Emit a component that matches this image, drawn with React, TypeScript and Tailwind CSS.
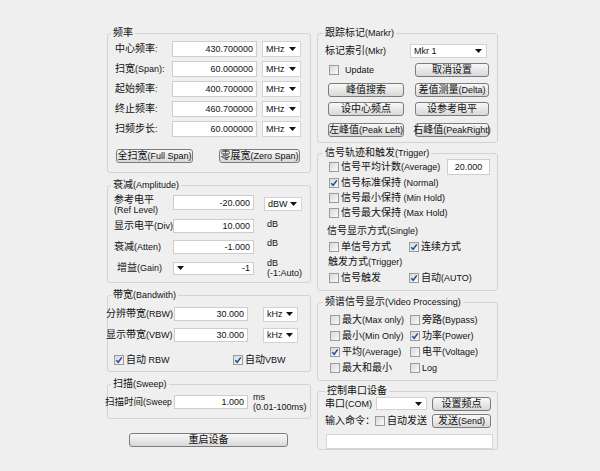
import React from "react";

function T({ s, lat = "text-[9px]" }: { s: string; lat?: string }) {
  const parts = s.match(/[\u0000-\u1fff]+|[^\u0000-\u1fff]+/g) || [];
  return (
    <>
      {parts.map((p, i) =>
        p.charCodeAt(0) < 0x2000 ? (
          <span key={i} className={lat}>
            {p}
          </span>
        ) : (
          <span key={i}>{p}</span>
        )
      )}
    </>
  );
}

function Arrow() {
  return (
    <svg width="7" height="4" viewBox="0 0 7 4" className="shrink-0">
      <path d="M0 0h7L3.5 4z" fill="#111" />
    </svg>
  );
}

function Group({
  title,
  cls = "",
  lg = "ml-[3px]",
  children,
}: {
  title: string;
  cls?: string;
  lg?: string;
  children: React.ReactNode;
}) {
  return (
    <fieldset className={"border border-[#d3d3d3] rounded-[3px] min-w-0 " + cls}>
      <legend className={"px-[2px] leading-[12px] whitespace-nowrap " + lg}>
        <T s={title} />
      </legend>
      {children}
    </fieldset>
  );
}

function Field({ cls, v, center }: { cls: string; v?: string; center?: boolean }) {
  return (
    <div
      className={
        "bg-white border border-[#cdcdcd] flex items-center text-[9px] shrink-0 " +
        (center ? "justify-center " : "justify-end pr-[3px] ") +
        cls
      }
    >
      {v}
    </div>
  );
}

function Select({ cls, v }: { cls: string; v?: string }) {
  return (
    <div
      className={
        "bg-white border border-[#d2d2d2] flex items-center justify-between pl-[3px] pr-[4px] text-[9px] shrink-0 " +
        cls
      }
    >
      <span>{v}</span>
      <Arrow />
    </div>
  );
}

function Btn({ cls, t }: { cls: string; t: string }) {
  return (
    <div
      className={
        "h-[14px] border border-[#7c7c7c] rounded-[3px] bg-linear-to-b from-[#f8f8f8] to-[#d8d8d8] flex items-center justify-center whitespace-nowrap shrink-0 leading-[12px] " +
        cls
      }
    >
      <T s={t} />
    </div>
  );
}

function CB({ checked, cls = "" }: { checked?: boolean; cls?: string }) {
  return (
    <span
      className={
        "w-[10px] h-[10px] border border-[#9a9a9a] bg-linear-to-br from-[#d9d9d9] to-[#fafafa] inline-flex items-center justify-center shrink-0 " +
        cls
      }
    >
      {checked && (
        <svg width="8" height="8" viewBox="0 0 8 8">
          <path d="M1.3 4.2L3.2 6.3L6.8 1.4" stroke="#24479a" strokeWidth="1.5" fill="none" />
        </svg>
      )}
    </span>
  );
}

function Check({ t, checked, w }: { t: string; checked?: boolean; w?: string }) {
  return (
    <div className={"flex items-center whitespace-nowrap " + (w || "")}>
      <CB checked={checked} />
      <span className="ml-[2px]">
        <T s={t} />
      </span>
    </div>
  );
}

export default function App() {
  const freq: [string, string][] = [
    ["中心频率:", "430.700000"],
    ["扫宽(Span):", "60.000000"],
    ["起始频率:", "400.700000"],
    ["终止频率:", "460.700000"],
    ["扫频步长:", "60.000000"],
  ];
  return (
    <div className="w-[600px] h-[471px] bg-[#efefef] flex gap-[6px] pl-[107px] pt-[27px] font-['Liberation_Sans','Noto_Sans_CJK_SC',sans-serif] text-[10px] leading-[12px] text-[#111] overflow-hidden">
      {/* Left column */}
      <div className="w-[204px] flex flex-col">
        <Group title="频率" lg="ml-[3px]">
          <div className="pt-[2px] pb-[9px] pl-[7px] flex flex-col gap-[4px]">
            {freq.map(([l, v]) => (
              <div key={l} className="flex items-center h-[16px]">
                <span className="w-[57px] whitespace-nowrap">
                  <T s={l} />
                </span>
                <Field cls="w-[85px] h-[16px]" v={v} />
                <Select cls="ml-[5px] w-[39px] h-[16px]" v="MHz" />
              </div>
            ))}
            <div className="flex mt-[8px]">
              <Btn cls="ml-[1px] w-[77px]" t="全扫宽(Full Span)" />
              <Btn cls="ml-[26px] w-[81px]" t="零展宽(Zero Span)" />
            </div>
          </div>
        </Group>

        <Group title="衰减(Amplitude)" cls="mt-[6px]" lg="ml-[3px]">
          <div className="pt-[4px] pb-[7px] pl-[6px] flex flex-col">
            <div className="flex items-start h-[21px]">
              <span className="w-[59px] leading-[10px] flex flex-col whitespace-nowrap">
                <span>参考电平</span>
                <span>
                  <T s="(Ref Level)" />
                </span>
              </span>
              <Field cls="w-[81px] h-[15px]" v="-20.000" />
              <Select cls="ml-[10px] mt-[2px] w-[38px] h-[14px]" v="dBW" />
            </div>
            <div className="flex items-center h-[14px] mt-[3px]">
              <span className="w-[59px] whitespace-nowrap">
                <T s="显示电平(Div)" />
              </span>
              <Field cls="w-[81px] h-[14px]" v="10.000" />
              <span className="ml-[13px] -mt-[5px] text-[9px]">dB</span>
            </div>
            <div className="flex items-center h-[14px] mt-[7px]">
              <span className="w-[59px] whitespace-nowrap">
                <T s="衰减(Atten)" />
              </span>
              <Field cls="w-[81px] h-[14px]" v="-1.000" />
              <span className="ml-[13px] -mt-[9px] text-[9px]">dB</span>
            </div>
            <div className="flex items-center h-[14px] mt-[7px]">
              <span className="w-[59px] pl-[3px] whitespace-nowrap">
                <T s="增益(Gain)" />
              </span>
              <div className="w-[81px] h-[13px] bg-white border border-[#cdcdcd] flex items-center justify-between pl-[3px] pr-[3px] text-[9px] shrink-0">
                <Arrow />
                <span>-1</span>
              </div>
              <div className="ml-[13px] flex flex-col leading-[10px] text-[9px] whitespace-nowrap">
                <span>dB</span>
                <span>(-1:Auto)</span>
              </div>
            </div>
          </div>
        </Group>

        <Group title="带宽(Bandwith)" cls="mt-[6px]" lg="ml-[3px]">
          <div className="pt-[6px] pb-[5px] flex flex-col">
            <div className="flex items-center h-[14px] -ml-[2px]">
              <span className="w-[68px] whitespace-nowrap">
                <T s="分辨带宽(RBW)" />
              </span>
              <Field cls="w-[74px] h-[14px]" v="30.000" />
              <Select cls="ml-[15px] w-[35px] h-[15px]" v="kHz" />
            </div>
            <div className="flex items-center h-[14px] -ml-[2px] mt-[7px]">
              <span className="w-[68px] whitespace-nowrap">
                <T s="显示带宽(VBW)" />
              </span>
              <Field cls="w-[74px] h-[14px]" v="30.000" />
              <Select cls="ml-[15px] w-[35px] h-[15px]" v="kHz" />
            </div>
            <div className="flex items-center h-[12px] mt-[12px] pl-[6px]">
              <Check t="自动 RBW" checked w="w-[119px]" />
              <Check t="自动VBW" checked />
            </div>
          </div>
        </Group>

        <Group title="扫描(Sweep)" cls="mt-[6px]" lg="ml-[3px]">
          <div className="pt-[5px] pb-[9px]">
            <div className="flex items-center h-[14px] -ml-[3px]">
              <span className="w-[69px] whitespace-nowrap text-[9.5px]">
                <T s="扫描时间(Sweep" lat="text-[8.5px]" />
              </span>
              <Field cls="w-[74px] h-[14px]" v="1.000" />
              <div className="ml-[5px] flex flex-col leading-[10px] text-[9px] whitespace-nowrap">
                <span>ms</span>
                <span>(0.01-100ms)</span>
              </div>
            </div>
          </div>
        </Group>

        <Btn cls="mt-[14px] ml-[22px] w-[159px]" t="重启设备" />
      </div>

      {/* Right column */}
      <div className="w-[181px] flex flex-col">
        <Group title="跟踪标记(Markr)" lg="ml-[5px]">
          <div className="pt-[5px] pb-[5px] flex flex-col">
            <div className="flex items-center h-[14px] pl-[7px]">
              <span className="w-[85px] whitespace-nowrap">
                <T s="标记索引(Mkr)" />
              </span>
              <Select cls="w-[77px] h-[14px]" v="Mkr 1" />
            </div>
            <div className="flex items-center h-[14px] mt-[5px] pl-[10px] gap-[11px]">
              <div className="w-[76px] flex items-center">
                <CB cls="ml-[1px]" />
                <span className="ml-[6px] text-[9px]">Update</span>
              </div>
              <Btn cls="w-[74px]" t="取消设置" />
            </div>
            <div className="flex mt-[6px] pl-[10px] gap-[11px]">
              <Btn cls="w-[76px]" t="峰值搜索" />
              <Btn cls="w-[74px]" t="差值测量(Delta)" />
            </div>
            <div className="flex mt-[5px] pl-[10px] gap-[11px]">
              <Btn cls="w-[76px]" t="设中心频点" />
              <Btn cls="w-[74px]" t="设参考电平" />
            </div>
            <div className="flex mt-[7px] pl-[10px] gap-[11px]">
              <Btn cls="w-[76px]" t="左峰值(Peak Left)" />
              <Btn cls="w-[74px]" t="右峰值(PeakRight)" />
            </div>
          </div>
        </Group>

        <Group title="信号轨迹和触发(Trigger)" cls="mt-[4px]" lg="ml-[5px]">
          <div className="pb-[5px] pl-[11px] flex flex-col">
            <div className="flex items-center h-[16px]">
              <Check t="信号平均计数(Average)" />
              <Field cls="ml-auto mr-[7px] w-[43px] h-[16px]" v="20.000" center />
            </div>
            <div className="flex items-center h-[15px]">
              <Check t="信号标准保持 (Normal)" checked />
            </div>
            <div className="flex items-center h-[15px]">
              <Check t="信号最小保持 (Min Hold)" />
            </div>
            <div className="flex items-center h-[15px]">
              <Check t="信号最大保持 (Max Hold)" />
            </div>
            <div className="flex items-center h-[14px] mt-[4px] -ml-[2px] whitespace-nowrap">
              <T s="信号显示方式(Single)" />
            </div>
            <div className="flex items-center h-[14px] mt-[2px]">
              <Check t="单信号方式" w="w-[80px]" />
              <Check t="连续方式" checked />
            </div>
            <div className="flex items-center h-[14px] mt-[1px] -ml-[1px] whitespace-nowrap">
              <T s="触发方式(Trigger)" />
            </div>
            <div className="flex items-center h-[14px] mt-[2px]">
              <Check t="信号触发" w="w-[80px]" />
              <Check t="自动(AUTO)" checked />
            </div>
          </div>
        </Group>

        <Group title="频谱信号显示(Video Processing)" cls="mt-[5px]" lg="ml-[5px]">
          <div className="pt-[4px] pb-[4px] pl-[12px] flex flex-col">
            <div className="flex items-center h-[16px]">
              <Check t="最大(Max only)" w="w-[80px]" />
              <Check t="旁路(Bypass)" />
            </div>
            <div className="flex items-center h-[16px]">
              <Check t="最小(Min Only)" w="w-[80px]" />
              <Check t="功率(Power)" checked />
            </div>
            <div className="flex items-center h-[16px]">
              <Check t="平均(Average)" checked w="w-[80px]" />
              <Check t="电平(Voltage)" />
            </div>
            <div className="flex items-center h-[16px]">
              <Check t="最大和最小" w="w-[80px]" />
              <Check t="Log" />
            </div>
          </div>
        </Group>

        <Group title="控制串口设备" cls="mt-[4px]" lg="ml-[7px]">
          <div className="flex flex-col">
            <div className="flex items-center h-[13px] pl-[7px]">
              <span className="w-[51px] whitespace-nowrap">
                <T s="串口(COM)" />
              </span>
              <Select cls="w-[51px] h-[13px]" v="" />
              <Btn cls="ml-[5px] w-[59px]" t="设置频点" />
            </div>
            <div className="flex items-center h-[14px] mt-[4px] pl-[7px]">
              <div className="w-[107px] flex items-center whitespace-nowrap">
                <span>输入命令：</span>
                <CB />
                <span className="ml-[2px]">自动发送</span>
              </div>
              <Btn cls="w-[59px]" t="发送(Send)" />
            </div>
            <div className="mt-[6px] pl-[8px]">
              <div className="w-[167px] h-[15px] bg-white border border-[#d6d6d6]" />
            </div>
          </div>
        </Group>
      </div>
    </div>
  );
}
